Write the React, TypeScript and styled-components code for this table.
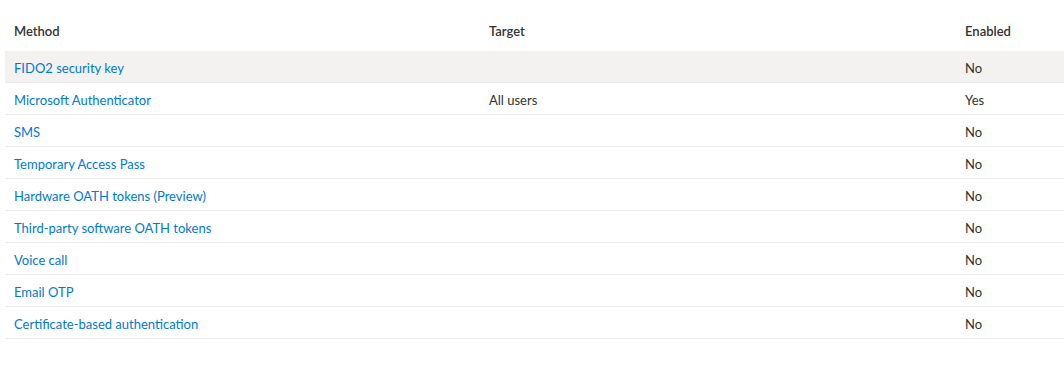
import React from "react";
import styled, { createGlobalStyle } from "styled-components";

const GlobalStyle = createGlobalStyle`
    body {
        margin: 0;
        background: #fff;
        font-family: Lato, "Open Sans", sans-serif;
        font-size: 13px;
        color: #323130;
    }
`;

const Page = styled.div`
    padding: 17px 0 0 5px;
`;

const Row = styled.div<{ $header?: boolean; $selected?: boolean }>`
    display: grid;
    grid-template-columns: 475px 476px 1fr;
    align-items: center;
    box-sizing: border-box;
    height: ${(p) => (p.$header ? "34px" : "32px")};
    padding: ${(p) => (p.$header ? "0 0 5px" : "2px 0 0")};
    border-bottom: 1px solid ${(p) => (p.$header ? "transparent" : "#edebe9")};
    background: ${(p) => (p.$selected ? "#f3f2f1" : "transparent")};
    font-weight: ${(p) => (p.$header ? 600 : 400)};
`;

const Cell = styled.div`
    padding-left: 9px;
    white-space: nowrap;
`;

const Link = styled.a`
    color: #0078d4;
    text-decoration: none;
    cursor: pointer;
`;

const methods = [
    { name: "FIDO2 security key", target: "", enabled: "No" },
    { name: "Microsoft Authenticator", target: "All users", enabled: "Yes" },
    { name: "SMS", target: "", enabled: "No" },
    { name: "Temporary Access Pass", target: "", enabled: "No" },
    { name: "Hardware OATH tokens (Preview)", target: "", enabled: "No" },
    { name: "Third-party software OATH tokens", target: "", enabled: "No" },
    { name: "Voice call", target: "", enabled: "No" },
    { name: "Email OTP", target: "", enabled: "No" },
    { name: "Certificate-based authentication", target: "", enabled: "No" },
];

const App = () => {
    return (
        <>
            <GlobalStyle />
            <Page>
                <Row $header>
                    <Cell>Method</Cell>
                    <Cell>Target</Cell>
                    <Cell>Enabled</Cell>
                </Row>
                {methods.map((m, i) => (
                    <Row key={m.name} $selected={i === 0}>
                        <Cell>
                            <Link>{m.name}</Link>
                        </Cell>
                        <Cell>{m.target}</Cell>
                        <Cell>{m.enabled}</Cell>
                    </Row>
                ))}
            </Page>
        </>
    );
};

export default App;
